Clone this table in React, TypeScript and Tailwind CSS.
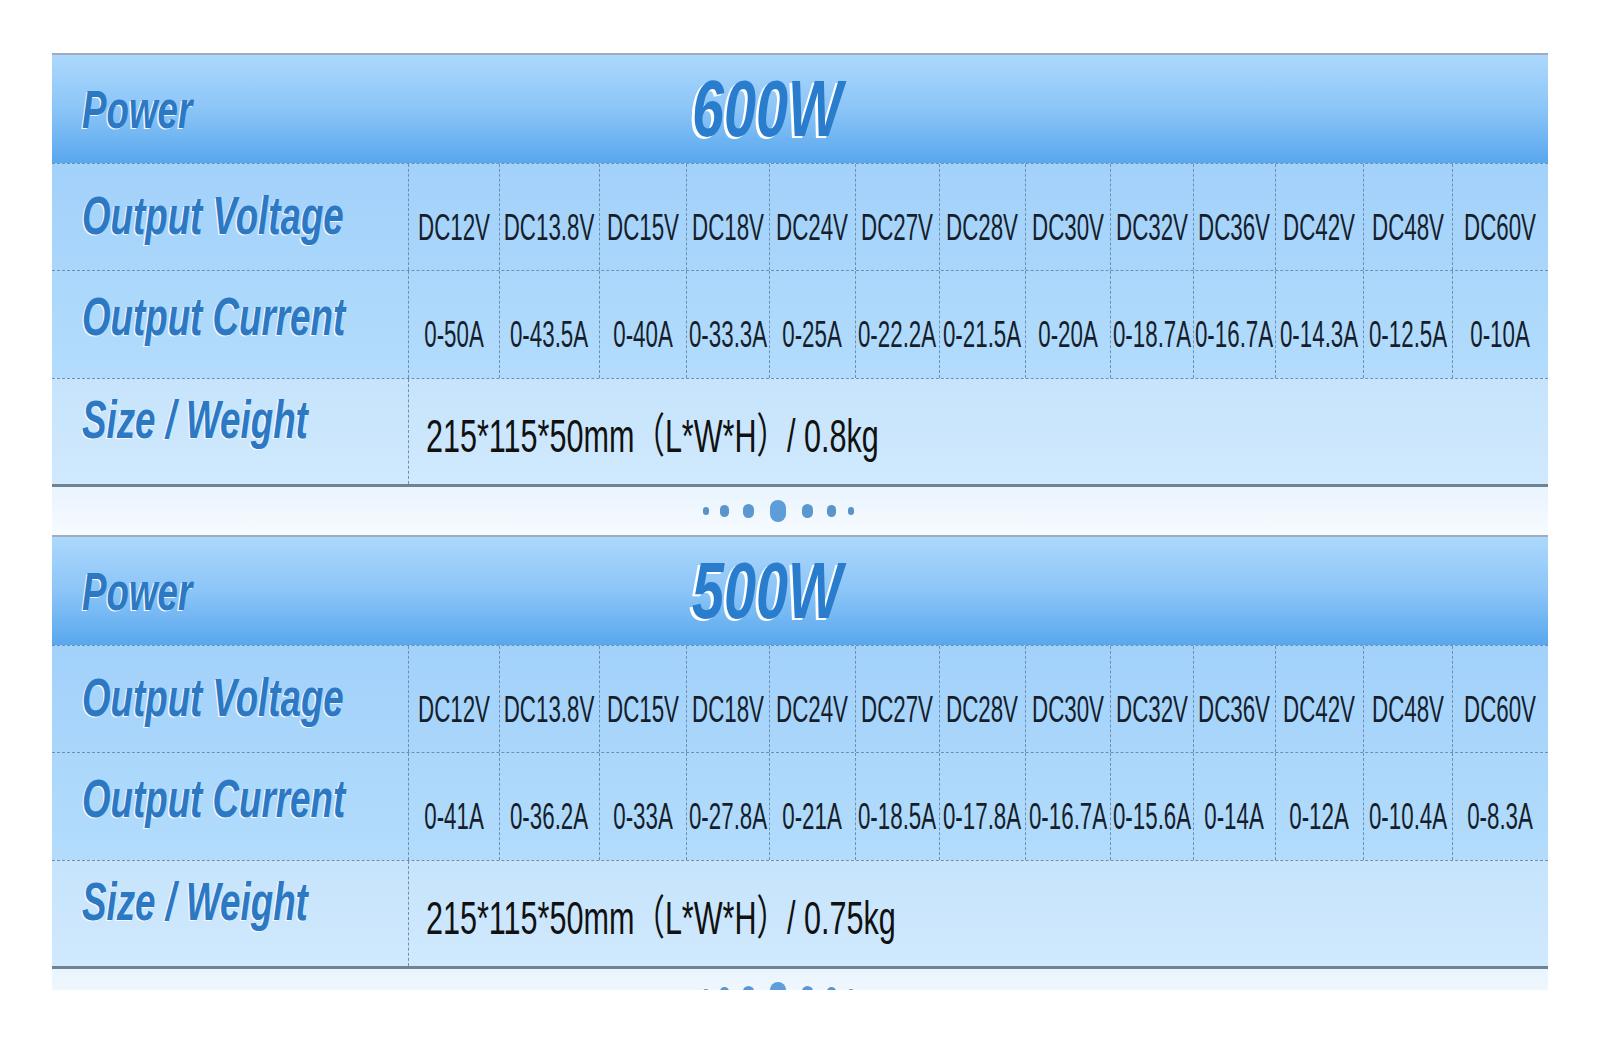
import React from "react";

const volts = ["DC12V", "DC13.8V", "DC15V", "DC18V", "DC24V", "DC27V", "DC28V", "DC30V", "DC32V", "DC36V", "DC42V", "DC48V", "DC60V"];
const cur600 = ["0-50A", "0-43.5A", "0-40A", "0-33.3A", "0-25A", "0-22.2A", "0-21.5A", "0-20A", "0-18.7A", "0-16.7A", "0-14.3A", "0-12.5A", "0-10A"];
const cur500 = ["0-41A", "0-36.2A", "0-33A", "0-27.8A", "0-21A", "0-18.5A", "0-17.8A", "0-16.7A", "0-15.6A", "0-14A", "0-12A", "0-10.4A", "0-8.3A"];

const gridCols =
  "grid grid-cols-[356px_91px_100px_87px_83px_86px_84px_86px_85px_83px_82px_88px_89px_96px]";

const font = "font-['Liberation_Sans','Noto_Sans_CJK_SC',sans-serif]";

function Label({ children, cls }: { children: React.ReactNode; cls: string }) {
  return (
    <div className={`flex items-center pl-[30px] ${cls}`}>
      <span
        className={`inline-block whitespace-nowrap origin-left [transform:scaleX(0.68)] text-[54px] leading-none font-bold italic text-[#2d78c2] [text-shadow:-2px_1px_0_#f4faff] ${font}`}
      >
        {children}
      </span>
    </div>
  );
}

function DataCell({ text, pt }: { text: string; pt: string }) {
  return (
    <div className={`flex items-center justify-center border-l border-dashed border-[#6f8fb2] ${pt}`}>
      <span
        className={`inline-block whitespace-nowrap [transform:scaleX(0.62)] text-[36px] leading-none text-[#161e2c] ${font}`}
      >
        {text}
      </span>
    </div>
  );
}

function Dots() {
  return (
    <div className="flex h-[48px] items-center bg-linear-to-b from-[#e9f4fd] to-[#f7fbff] pl-[651px]">
      <div className="h-[8px] w-[6px] rounded-full bg-[#5b93c8]" />
      <div className="ml-[11px] h-[12px] w-[9px] rounded-full bg-[#5b95cc]" />
      <div className="ml-[14px] h-[14px] w-[11px] rounded-full bg-[#5b97d0]" />
      <div className="ml-[16px] h-[22px] w-[16px] rounded-full bg-[#5d9dd9]" />
      <div className="ml-[16px] h-[14px] w-[11px] rounded-full bg-[#5b97d0]" />
      <div className="ml-[14px] h-[12px] w-[9px] rounded-full bg-[#5b95cc]" />
      <div className="ml-[12px] h-[8px] w-[6px] rounded-full bg-[#5b93c8]" />
    </div>
  );
}

function Block({ watts, currents, weight }: { watts: string; currents: string[]; weight: string }) {
  return (
    <div className="flex flex-col">
      <div className="h-[2px] bg-[#9eadbb]" />
      {/* header */}
      <div className="flex h-[108px] items-center bg-linear-to-b from-[#acd8fc] via-[#8bc5f7] to-[#58a7ee]">
        <div className="w-[356px]">
          <Label cls="">Power</Label>
        </div>
        <span
          className={`ml-[284px] inline-block whitespace-nowrap origin-left [transform:scaleX(0.72)] text-[80px] leading-none font-bold italic text-[#2a7ccc] [text-shadow:-4px_2px_0_#ffffff] ${font}`}
        >
          {watts}
        </span>
      </div>
      {/* voltage row */}
      <div className={`${gridCols} h-[107px] border-t border-dashed border-[#6f8fb2] bg-linear-to-b from-[#a2d1fa] to-[#aad6fb]`}>
        <Label cls="pb-[4px]">Output Voltage</Label>
        {volts.map((v) => (
          <DataCell key={v} text={v} pt="pt-[22px]" />
        ))}
      </div>
      {/* current row */}
      <div className={`${gridCols} h-[108px] border-t border-dashed border-[#6f8fb2] bg-linear-to-b from-[#aad7fb] to-[#b3dcfc]`}>
        <Label cls="pb-[18px]">Output Current</Label>
        {currents.map((c, i) => (
          <DataCell key={i} text={c} pt="pt-[20px]" />
        ))}
      </div>
      {/* size row */}
      <div className="grid h-[106px] grid-cols-[356px_1fr] border-t border-dashed border-[#6f8fb2] bg-linear-to-b from-[#c6e4fc] to-[#d0e9fd]">
        <Label cls="pb-[26px]">Size / Weight</Label>
        <div className="flex items-center border-l border-dashed border-[#6f8fb2] pl-[17px] pt-[8px]">
          <span
            className={`inline-block whitespace-nowrap origin-left [transform:scaleX(0.65)] text-[47px] leading-none text-[#111111] ${font}`}
          >
            {`215*115*50mm（L*W*H）/ ${weight}`}
          </span>
        </div>
      </div>
      <div className="h-[3px] bg-[#6d8495]" />
      <Dots />
    </div>
  );
}

export default function App() {
  return (
    <div className="min-h-[1042px] w-[1600px] bg-white px-[52px] pt-[53px]">
      <div className="h-[937px] overflow-hidden">
        <Block watts="600W" currents={cur600} weight="0.8kg" />
        <Block watts="500W" currents={cur500} weight="0.75kg" />
      </div>
    </div>
  );
}
